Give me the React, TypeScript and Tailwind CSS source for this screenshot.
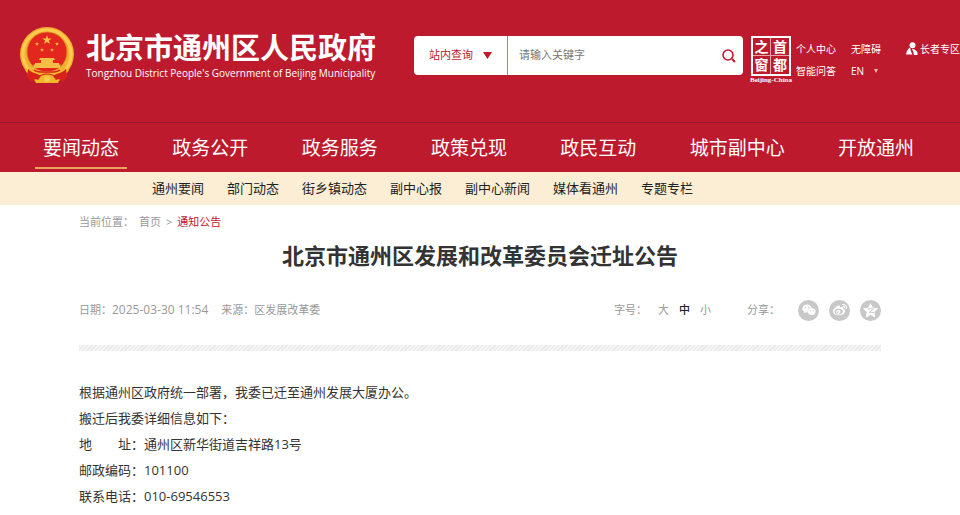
import { FaWeibo, FaWeixin } from 'react-icons/fa'

const navItems = ['要闻动态', '政务公开', '政务服务', '政策兑现', '政民互动', '城市副中心', '开放通州']
const subItems = ['通州要闻', '部门动态', '街乡镇动态', '副中心报', '副中心新闻', '媒体看通州', '专题专栏']

const STAR = 'M0-5 1.2-1.6 4.8-1.5 1.9.6 2.9 4 0 2-2.9 4-1.9.6-4.8-1.5-1.2-1.6Z'

function Emblem() {
  return (
    <svg className="h-[57px] w-[54px] shrink-0" viewBox="0 0 54 57" aria-hidden="true">
      <ellipse cx="27" cy="27" rx="27" ry="27" fill="#f0b032" />
      <circle cx="27" cy="27" r="24" fill="none" stroke="#fbcb4e" strokeWidth="3" />
      <circle cx="27" cy="25" r="20" fill="#e3271f" />
      <circle cx="27" cy="25" r="20" fill="none" stroke="#d98a1c" strokeWidth="0.8" />
      <g fill="#f6bd45">
        <path d={STAR} transform="translate(27 13)" />
        <path d={STAR} transform="translate(17 17) scale(.42)" />
        <path d={STAR} transform="translate(37 17) scale(.42)" />
        <path d={STAR} transform="translate(22 23) scale(.42)" />
        <path d={STAR} transform="translate(32 23) scale(.42)" />
        <path d="M20 31h14l1 2h-2v3h6v1.500h1.500V41h-27v-3.500H15V36h6v-3h-2z" />
      </g>
      <path d="M9 41c6 3 12 3 18 3s12 0 18-3l4 2c-3 6-9 8-11 13H16C14 51 8 49 5 43z" fill="#f3b62c" />
      <path d="M8 42c3 4 9 4 13 7l-3 4c-3-2-5 1-8 2 0-3-3-3-3-6s1-4 1-7zM46 42c-3 4-9 4-13 7l3 4c3-2 5 1 8 2 0-3 3-3 3-6s-1-4-1-7z" fill="#d9211c" />
      <path d="M14 43c4 3 9 2 13 2s9 1 13-2" fill="none" stroke="#d9211c" strokeWidth="1.500" />
      <path d="M19 49c3-1 5-2 8-2s5 1 8 2" fill="none" stroke="#d9211c" strokeWidth="1" />
      <circle cx="27" cy="52" r="3" fill="#fbcb4e" />
    </svg>
  )
}

function Seal() {
  return (
    <a href="#capital" className="flex w-[44px] shrink-0 flex-col items-center text-white">
      <span className="grid size-10 grid-cols-2 grid-rows-2 border-2 border-white text-center text-[14px] leading-[18px] font-bold">
        <span className="border-r border-b border-white/60">之</span>
        <span className="border-b border-white/60">首</span>
        <span className="border-r border-white/60">窗</span>
        <span>都</span>
      </span>
      <span className="font-['Liberation_Serif',serif] text-[7px] leading-[8px] font-bold whitespace-nowrap">Beijing-China</span>
    </a>
  )
}

function Header() {
  return (
    <header className="flex h-[122px] items-start overflow-hidden pt-[27px] pl-5">
      <Emblem />
      <div className="ml-3 w-[292px] shrink-0 pt-1 whitespace-nowrap text-white">
        <div className="text-[29px] leading-[34px] font-bold">北京市通州区人民政府</div>
        <div className="font-['Open_Sans',sans-serif] text-[10px] leading-4">Tongzhou District People's Government of Beijing Municipality</div>
      </div>

      <form className="mt-[9px] ml-9 flex h-[39px] min-w-0 flex-1 overflow-hidden rounded bg-white">
        <div className="relative w-[94px] shrink-0 border-r border-r-[#d8727c]">
          <select aria-label="查询范围" className="h-full w-full appearance-none pl-[15px] text-[11px] text-[#bd1a2d]">
            <option>站内查询</option>
          </select>
          <svg className="pointer-events-none absolute top-4 right-[15px] h-[7px] w-[9px]" viewBox="0 0 9 7" fill="#bd1a2d">
            <path d="M0 0h9L4.500 7z" />
          </svg>
        </div>
        <input aria-label="关键字" placeholder="请输入关键字" className="min-w-0 flex-1 px-[11px] text-[11px] text-[#666] placeholder:text-[#777]" />
        <button type="button" aria-label="搜索" className="pr-[7px] pl-2">
          <svg className="size-[15px]" viewBox="0 0 15 15" fill="none" stroke="#bd1a2d" strokeWidth="1.600">
            <circle cx="7" cy="7" r="5" />
            <path d="M11 11l3 3" strokeWidth="2" />
          </svg>
        </button>
      </form>

      <div className="mt-[9px] ml-[6px] flex shrink-0 items-start">
        <Seal />
        <div className="ml-[3px] grid grid-cols-[55px_69px_40px] gap-y-2 pt-[6px] text-[10px] leading-[14px] whitespace-nowrap text-white">
          <a href="#user" className="h-[14px]">个人中心</a>
          <a href="#access" className="h-[14px]">无障碍</a>
          <a href="#elder" className="relative h-[14px]">
            <svg className="absolute top-0 -left-[14px] h-[13px] w-3" viewBox="0 0 12 13" fill="#fff">
              <circle cx="6.500" cy="3.200" r="3" />
              <path d="M4 5.500C1.500 7 .5 9.500 0 12.500h6.500L5 9.500zM6 7c3 0 4 1.500 5.500 3.500V13H8l-.5-2.500z" />
            </svg>
            长者专区
          </a>
          <a href="#qa" className="h-[14px]">智能问答</a>
          <a href="#en" className="flex h-[14px] items-center gap-[10px]">
            EN
            <svg className="size-1" viewBox="0 0 4 4" fill="#eeb7a5"><path d="M0 0h4L2 4z" /></svg>
          </a>
        </div>
      </div>
    </header>
  )
}

function Meta() {
  return (
    <div className="flex h-[22px] items-center text-[11px] text-[#999]">
      <span>日期：</span>
      <time className="text-[12px]">2025-03-30 11:54</time>
      <span className="ml-[13px]">来源：区发展改革委</span>
      <div className="ml-auto flex items-center">
        <span>字号：</span>
        <button type="button" className="ml-[11px]">大</button>
        <button type="button" className="ml-[10px] font-medium text-[#222]">中</button>
        <button type="button" className="ml-[10px]">小</button>
        <span className="ml-9">分享：</span>
      </div>
      <div className="ml-[18px] flex gap-[10px] text-white">
        <a href="#wechat" aria-label="微信" className="flex size-[21px] items-center justify-center rounded-full bg-[#c8c8c8]">
          <FaWeixin className="size-[14px]" />
        </a>
        <a href="#weibo" aria-label="微博" className="flex size-[21px] items-center justify-center rounded-full bg-[#c8c8c8]">
          <FaWeibo className="size-[14px]" />
        </a>
        <a href="#qzone" aria-label="QQ空间" className="flex size-[21px] items-center justify-center rounded-full bg-[#c8c8c8]">
          <svg className="size-[15px]" viewBox="0 0 16 16">
            <path d="M8 .8l2.200 4.700 5.200.6-3.900 3.500 1.100 5.200L8 12.300l-4.600 2.500 1.100-5.200L.6 6.100l5.200-.6z" fill="#fff" stroke="#fff" strokeLinejoin="round" />
            <path d="M5 6.500c2-.5 4-.5 6 0L6.800 10c2 .4 3.500.4 5.200-.2" fill="none" stroke="#c8c8c8" />
          </svg>
        </a>
      </div>
    </div>
  )
}

export default function App() {
  return (
    <div className="overflow-hidden bg-white font-['Open_Sans','Noto_Sans_CJK_SC',sans-serif]">
      <div className="bg-[#bd1a2d]">
        <Header />
        <nav className="flex h-[50px] justify-between border-t border-[#97182a] pr-[38px] pl-[35px] text-[19px] text-white">
          {navItems.map((item, i) => (
            <a
              key={item}
              href="#nav"
              className={`h-[46px] border-b-2 px-2 leading-[50px] whitespace-nowrap ${i === 0 ? 'border-[#eca35c]' : 'border-transparent'}`}
            >
              {item}
            </a>
          ))}
        </nav>
      </div>
      <nav className="flex h-[33px] gap-[23px] bg-[#fbeed5] pl-[152px] text-[13px] leading-[32px] whitespace-nowrap text-[#222]">
        {subItems.map((item) => (
          <a key={item} href="#sub">{item}</a>
        ))}
      </nav>

      <main className="px-[79px] pt-[9px]">
        <div className="flex h-4 items-center text-[11px] text-[#999]">
          <span>当前位置：</span>
          <a href="#home" className="ml-[5px]">首页</a>
          <span className="mx-[5px]">&gt;</span>
          <a href="#notice" className="text-[#bd1a2d]">通知公告</a>
        </div>
        <h1 className="mt-2 text-center text-[22px] leading-[34px] font-bold text-[#333]">北京市通州区发展和改革委员会迁址公告</h1>
        <div className="mt-[27px]">
          <Meta />
        </div>
        <div className="mt-6 h-[6px] bg-[repeating-linear-gradient(135deg,#e9e9e9_0_1px,#f4f4f4_1px_3px)]" />
        <article className="mt-7 text-[13px] leading-[26px] text-[#333]">
          <p>根据通州区政府统一部署，我委已迁至通州发展大厦办公。</p>
          <p>搬迁后我委详细信息如下：</p>
          <p>地　　址：通州区新华街道吉祥路13号</p>
          <p>邮政编码：101100</p>
          <p>联系电话：010-69546553</p>
        </article>
      </main>
    </div>
  )
}
